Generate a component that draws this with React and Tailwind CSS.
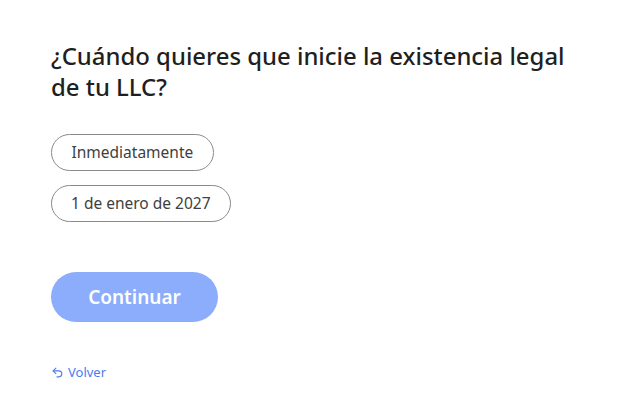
import { Undo2 } from "lucide-react";

export default function App() {
  return (
    <div className="min-h-screen bg-white pl-[51px] pt-[40px] font-['Noto_Sans','Lato',sans-serif] text-[#1f1f1f]">
      <h1 className="w-[530px] text-[23.9px] font-medium leading-[31px]">
        ¿Cuándo quieres que inicie la existencia legal de tu LLC?
      </h1>

      <div className="mt-[32px] flex flex-col items-start gap-[14px]">
        <button className="h-[37px] rounded-full border border-[#8a8a8a] px-[19.5px] text-[15.5px] text-[#404040]">
          Inmediatamente
        </button>
        <button className="h-[37px] rounded-full border border-[#8a8a8a] px-[19px] text-[15.5px] text-[#404040]">
          1 de enero de 2027
        </button>
      </div>

      <button className="mt-[50px] h-[50px] w-[167px] rounded-full bg-[#8badfb] text-[19px] font-semibold text-white">
        Continuar
      </button>

      <a href="#" className="mt-[40px] flex w-fit items-center gap-[4px] text-[13px] leading-[20px] text-[#4a7cf0]">
        <Undo2 size={13} strokeWidth={2} />
        Volver
      </a>
    </div>
  );
}
